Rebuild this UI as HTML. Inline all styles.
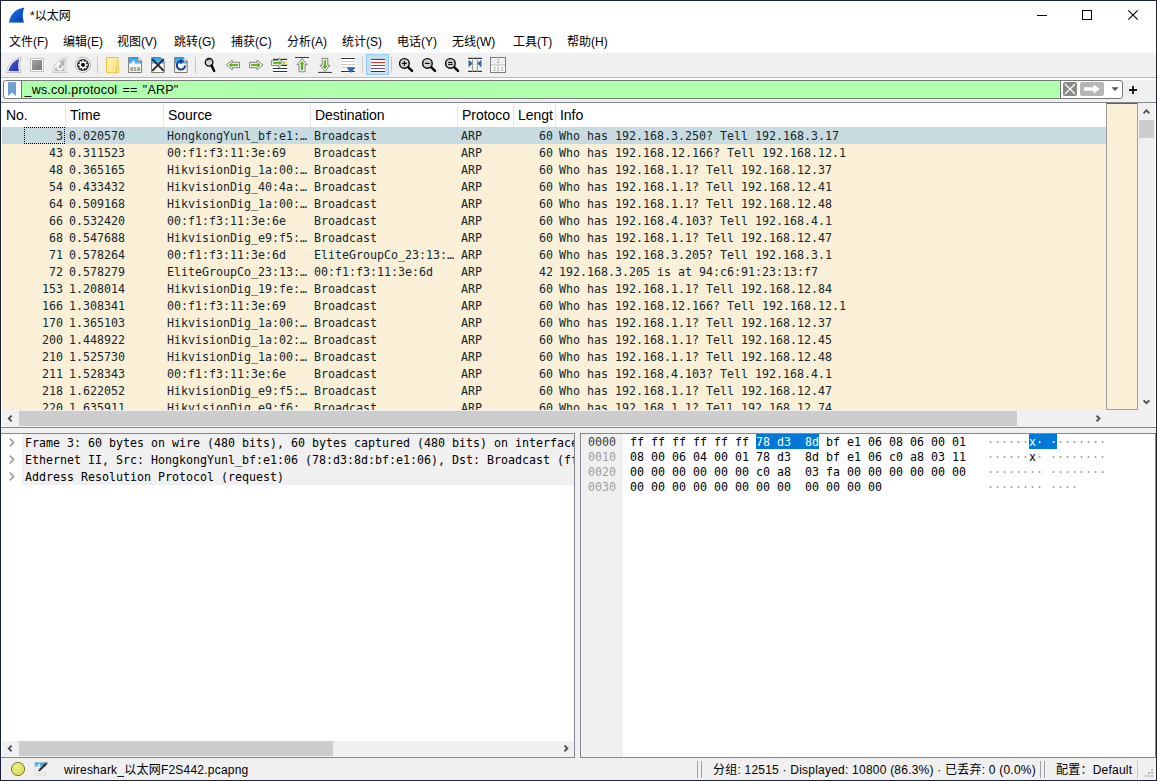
<!DOCTYPE html>
<html><head><meta charset="utf-8"><title>Wireshark</title>
<style>
*{box-sizing:border-box;margin:0;padding:0}
html,body{width:1157px;height:781px;overflow:hidden;background:#fff}
body{position:relative;font-family:"Liberation Sans","Noto Sans CJK SC",sans-serif;font-size:12px;color:#000}
.abs{position:absolute}
#win{position:absolute;left:0;top:0;width:1157px;height:781px;border:1px solid #1a2238;border-right-color:#1e2433;background:#f0f0f0}
#title{position:absolute;left:1px;top:1px;width:1155px;height:30px;background:#fff}
#title .t{position:absolute;left:29px;top:7px;font-size:12px;line-height:16px;white-space:nowrap}
#menu{position:absolute;left:1px;top:31px;width:1155px;height:21px;background:#fff}
#menu span{position:absolute;top:3px;line-height:16px;font-size:12px;white-space:nowrap}
#tb{position:absolute;left:1px;top:52px;width:1155px;height:25px;background:#f0f0f0;border-top:1px solid #fafafa}
#tbline{position:absolute;left:1px;top:77px;width:1155px;height:3px;background:#fcfcfc;border-top:1px solid #bcbcbc}
#filter{position:absolute;left:3px;top:80px;width:1120px;height:19px;border:1px solid #7a7a7a;border-radius:3px;background:#fff;overflow:hidden}
#filter .g{position:absolute;left:18px;top:0;width:1038px;height:17px;background:#afffaf}
#filter .txt{position:absolute;left:20.5px;top:1px;font-size:12.5px;letter-spacing:0.2px;word-spacing:1.6px;line-height:17px;white-space:nowrap}
#plist{position:absolute;left:1px;top:102px;width:1155px;height:325px;background:#fff;border-top:1px solid #828790}
.hdr{position:absolute;top:103px;height:24px;font-size:14px;letter-spacing:-0.04px;line-height:24px;white-space:nowrap}
.hsep{position:absolute;top:103px;width:1px;height:24px;background:#e5e5e5}
.row{position:absolute;left:2px;width:1104px;height:17px;background:#faf0d7;font-family:"DejaVu Sans Mono","Liberation Mono",monospace;font-size:11.63px;line-height:19px;white-space:pre;color:#12272e;overflow:hidden}
.row.sel{background:#c8dbe0}
.c{position:absolute;top:0;height:17px;line-height:19px}
.no{left:0;width:61px;text-align:right}
.tm{left:67px}
.src{left:165px}
.dst{left:312px}
.pr{left:459px}
.ln{left:515px;width:36px;text-align:right}
.inf{left:557px}

#mini{position:absolute;left:1106px;top:103px;width:32px;height:307px;background:#faf0d7;border:1px solid #a0a0a0;border-top:1px solid #0078d7}
#vsb{position:absolute;left:1138px;top:103px;width:17px;height:307px;background:#f0f0f0}
#vsb .th{position:absolute;left:1px;top:17px;width:15px;height:18px;background:#cdcdcd}
#hsb{position:absolute;left:2px;top:410px;width:1104px;height:17px;background:#f0f0f0}
#hsb .th{position:absolute;left:17px;top:1px;width:998px;height:15px;background:#cdcdcd}
#corner{position:absolute;left:1106px;top:410px;width:49px;height:17px;background:#f0f0f0}
#plb{position:absolute;left:1px;top:427px;width:1155px;height:1px;background:#828790}
#lp{position:absolute;left:1px;top:433px;width:574px;height:325px;background:#fff;border:1px solid #828790;border-left:none}
#rp{position:absolute;left:580px;top:433px;width:576px;height:325px;background:#fff;border:1px solid #828790}
.tr{position:absolute;left:22px;width:552px;height:17px;background:#f0f0f0;font-family:"DejaVu Sans Mono","Liberation Mono",monospace;font-size:11.63px;line-height:19px;white-space:pre;overflow:hidden;color:#000}
.tr span{position:absolute;left:3px;top:0}
#lhsb{position:absolute;left:2px;top:741px;width:572px;height:16px;background:#f0f0f0}
#lhsb .th{position:absolute;left:17px;top:0px;width:314px;height:15px;background:#cdcdcd}
#hexoff{position:absolute;left:581px;top:434px;width:42px;height:323px;background:#f0f0f0}
.hx{position:absolute;font-family:"DejaVu Sans Mono","Liberation Mono",monospace;font-size:11.63px;line-height:17px;height:15px;white-space:pre;color:#000}
.hx.off{left:588px;color:#a0a0a0}
.hx.by{left:630px}
.hx.as{left:987px;color:#000}
.hx .d{color:#9a9a9a}
.hsel{position:absolute;background:#0078d7;height:15px;top:434px}
.w{color:#fff}
#status{position:absolute;left:1px;top:758px;width:1155px;height:22px;background:#f0f0f0}
#status .s{position:absolute;top:4px;line-height:16px;font-size:12px;letter-spacing:0.22px;white-space:nowrap}
.vsep{position:absolute;top:761px;width:1px;height:17px;background:#a0a0a0}
svg{position:absolute;overflow:visible}
#tbicons{z-index:5}
</style></head><body>
<div id="win">
</div>
<div id="title"><span class="t">*以太网</span></div>
<div id="menu">
<span style="left:8px">文件(F)</span><span style="left:62px">编辑(E)</span><span style="left:116px">视图(V)</span><span style="left:173px">跳转(G)</span><span style="left:230px">捕获(C)</span><span style="left:286px">分析(A)</span><span style="left:341px">统计(S)</span><span style="left:396px">电话(Y)</span><span style="left:451px">无线(W)</span><span style="left:512px">工具(T)</span><span style="left:566px">帮助(H)</span>
</div>
<div id="tb"></div><div id="tbline"></div>
<div id="filter"><div class="g"></div><span class="txt">_ws.col.protocol == "ARP"</span></div>
<svg id="tbicons" style="left:0;top:0" width="1157" height="781" viewBox="0 0 1157 781">
<defs>
<linearGradient id="gfin" x1="0" y1="0" x2="1" y2="1"><stop offset="0" stop-color="#4a62d8"/><stop offset="1" stop-color="#1e2ea8"/></linearGradient>
<linearGradient id="gstop" x1="0" y1="0" x2="1" y2="1"><stop offset="0" stop-color="#a4a4a4"/><stop offset="1" stop-color="#767676"/></linearGradient>
<linearGradient id="gfold" x1="0" y1="0" x2="1" y2="1"><stop offset="0" stop-color="#fff0a8"/><stop offset="1" stop-color="#fde488"/></linearGradient>
<linearGradient id="gfile" x1="0" y1="0" x2="0" y2="1"><stop offset="0" stop-color="#2aa0ea"/><stop offset="0.36" stop-color="#5cb8f0"/><stop offset="0.46" stop-color="#f4f8f8"/><stop offset="1" stop-color="#fcfce6"/></linearGradient>
<linearGradient id="ggrn" x1="0" y1="0" x2="0" y2="1"><stop offset="0" stop-color="#6cc41c"/><stop offset="1" stop-color="#3c9400"/></linearGradient>
<linearGradient id="gtitle" x1="0" y1="0" x2="1" y2="1"><stop offset="0" stop-color="#2a86f0"/><stop offset="0.55" stop-color="#0c56cc"/><stop offset="1" stop-color="#0630a0"/></linearGradient>
</defs>
<!-- title icon -->
<path d="M9.1 22.7 C9.9 15 15 8.9 24.5 7.6 C22.6 11.6 22.1 17.2 24.1 22.7 Z" fill="url(#gtitle)"/>
<path d="M9.4 22.3 L24 22.3" stroke="#7c9cd8" stroke-width="0.9" fill="none"/>
<!-- window controls -->
<path d="M1037 15.5 H1047" stroke="#000" stroke-width="1" fill="none"/>
<rect x="1082.5" y="10.5" width="9" height="9" fill="none" stroke="#000" stroke-width="1"/>
<path d="M1128.3 10.3 L1137.7 19.7 M1137.7 10.3 L1128.3 19.7" stroke="#000" stroke-width="1.1" fill="none"/>
<!-- 1 start fin -->
<path d="M6.4 72.5 C7.6 65.5 12 59 21.4 57.3 C19.6 61.5 19.3 67 20.9 72.5 Z" fill="#fff" stroke="#b8b8b8" stroke-width="0.9"/>
<path d="M8.4 71.3 C9.6 65.8 13.2 60.8 19.3 58.9 C18 62.6 17.9 67.2 19 71.3 Z" fill="url(#gfin)"/>
<!-- 2 stop -->
<rect x="30.5" y="58.5" width="13" height="13" fill="#fafafa" stroke="#c4c4c4" stroke-width="1"/>
<rect x="32" y="60" width="10" height="10" fill="url(#gstop)"/>
<!-- 3 restart fin -->
<g transform="translate(46,0)">
<path d="M6.4 72.5 C7.6 65.5 12 59 21.4 57.3 C19.6 61.5 19.3 67 20.9 72.5 Z" fill="#f8f8f8" stroke="#c6c6c6" stroke-width="0.9"/>
<path d="M8.4 71.3 C9.6 65.8 13.2 60.8 19.3 58.9 C18 62.6 17.9 67.2 19 71.3 Z" fill="#b4b4b4"/>
<path d="M16.4 65.6 A2.7 2.7 0 1 1 12.6 64.6" fill="none" stroke="#fff" stroke-width="1.7"/>
<path d="M11.2 62.4 L15.2 63 L12.6 66.2 Z" fill="#fff"/>
</g>
<!-- 4 options gear -->
<circle cx="83" cy="64.9" r="7.6" fill="#fff" stroke="#a8a8a8" stroke-width="0.9"/>
<circle cx="83" cy="64.9" r="6" fill="#2a2a2a"/>
<g stroke="#fff" stroke-width="1.8" stroke-linecap="butt">
<path d="M83 60.3 V69.5 M78.4 64.9 H87.6 M79.75 61.65 L86.25 68.15 M86.25 61.65 L79.75 68.15"/>
</g>
<circle cx="83" cy="64.9" r="3.3" fill="#fff"/>
<rect x="81.2" y="63.1" width="3.6" height="3.6" rx="1.1" fill="#111"/>
<!-- sep -->
<rect x="97" y="57" width="1" height="16" fill="#c6c6c6"/>
<!-- 5 folder -->
<rect x="106.5" y="57.5" width="11.5" height="15.2" rx="0.8" fill="url(#gfold)" stroke="#e8c548" stroke-width="1.1"/>
<rect x="116.3" y="66.5" width="2.4" height="6.2" rx="0.6" fill="#fde994" stroke="#e8c548" stroke-width="1"/>
<!-- 6 file 010 -->
<g id="fileico">
<path d="M128.6 57.5 H138 L141.5 61 V72.5 H128.6 Z" fill="url(#gfile)" stroke="#7c7c78" stroke-width="1"/>
<path d="M138 57.5 V61 H141.5" fill="#f4ecd8" stroke="#7c7c78" stroke-width="0.7"/>
</g>
<path d="M131.5 64 C132.2 61.8 133.2 60.6 134.4 60 C134.1 61.4 134.2 62.8 134.6 64 Z" fill="#fff"/>
<text x="135" y="70.6" font-family="Liberation Mono,monospace" font-size="6.2" font-weight="bold" fill="#6c6c6c" text-anchor="middle" textLength="10" lengthAdjust="spacingAndGlyphs">010</text>
<!-- 7 file close -->
<g transform="translate(23,0)">
<path d="M128.6 57.5 H137.5 L141.2 61 V72.5 H128.6 Z" fill="url(#gfile)" stroke="#7c7c78" stroke-width="1"/>
<path d="M129.8 59.6 L140.2 70.4 M140.2 59.6 L129.8 70.4" stroke="#25292b" stroke-width="1.9" stroke-linecap="round"/>
</g>
<!-- 8 file reload -->
<g transform="translate(46,0)">
<path d="M128.6 57.5 H137.5 L141.2 61 V72.5 H128.6 Z" fill="url(#gfile)" stroke="#7c7c78" stroke-width="1"/>
<path d="M137.5 57.5 V61 H141.2" fill="#f4ecd8" stroke="#7c7c78" stroke-width="0.6"/>
<path d="M139 65.5 A4.1 4.1 0 1 1 135 61.3" fill="none" stroke="#103c94" stroke-width="2.1"/>
<path d="M134.2 58.8 L138.2 61.4 L134.2 63.9 Z" fill="#103c94"/>
</g>
<!-- sep -->
<rect x="195" y="57" width="1" height="16" fill="#c6c6c6"/>
<!-- 9 find -->
<circle cx="209.1" cy="62.3" r="3.8" fill="#d6d6d6" stroke="#000" stroke-width="1.3"/>
<path d="M207 60.8 A2.4 2.4 0 0 1 209.6 59.8" fill="none" stroke="#222" stroke-width="0.7"/>
<path d="M211.6 65.6 L214.2 71" stroke="#000" stroke-width="2.4" stroke-linecap="round"/>
<!-- 10 back -->
<path d="M226.3 65 L232.3 60.2 V62.3 H239.5 V67.7 H232.3 V69.8 Z" fill="#fff" stroke="#7e7e7e" stroke-width="1" stroke-linejoin="round"/>
<path d="M229 65 L231.6 62.9 V64.2 H238 V65.8 H231.6 V67.1 Z" fill="#4fa800" stroke="#4fa800" stroke-width="0.5"/>
<!-- 11 fwd -->
<path d="M263 65 L257 60.2 V62.3 H249.6 V67.7 H257 V69.8 Z" fill="#fff" stroke="#7e7e7e" stroke-width="1" stroke-linejoin="round"/>
<path d="M260.3 65 L257.7 62.9 V64.2 H251.2 V65.8 H257.7 V67.1 Z" fill="#4fa800" stroke="#4fa800" stroke-width="0.5"/>
<!-- 12 goto -->
<rect x="273" y="58" width="14.5" height="15" fill="#fff"/>
<rect x="284" y="61" width="3.3" height="3.4" fill="#fce94f"/>
<path d="M273 59.4 H287.2 M273 65.4 H287.2 M273 68.5 H287.2 M273 71.5 H287.2" stroke="#2e3436" stroke-width="1.1"/>
<path d="M284.4 62.9 L278.6 58.2 V60.4 H271.4 V65.4 H278.6 V67.6 Z" fill="#fff" stroke="#7e7e7e" stroke-width="0.9" stroke-linejoin="round"/>
<path d="M282 62.9 L279.6 60.9 V62.1 H273.2 V63.7 H279.6 V64.9 Z" fill="#5cb40c" stroke="#5cb40c" stroke-width="0.5"/>
<!-- 13 top -->
<rect x="294.6" y="56.5" width="15" height="2" fill="#fff"/>
<path d="M295 57.5 H309" stroke="#3a3e3a" stroke-width="1.1"/>
<path d="M302 58.6 L307 64.6 H305 V71.8 H299 V64.6 H297 Z" fill="#fff" stroke="#7e7e7e" stroke-width="1" stroke-linejoin="round"/>
<path d="M302 61.2 L304.1 63.8 H302.9 V69.8 H301.1 V63.8 H299.9 Z" fill="url(#ggrn)" stroke="#4fa800" stroke-width="0.5"/>
<!-- 14 bottom -->
<rect x="317.6" y="71.4" width="15" height="2" fill="#fff"/>
<path d="M318 72.4 H332" stroke="#3a3e3a" stroke-width="1.1"/>
<path d="M325 71.4 L330 65.3 H327.8 V58.4 H322.2 V65.3 H320 Z" fill="#fff" stroke="#7e7e7e" stroke-width="1" stroke-linejoin="round"/>
<path d="M325 68.8 L327.1 66.2 H325.9 V60.4 H324.1 V66.2 H322.9 Z" fill="url(#ggrn)" stroke="#4fa800" stroke-width="0.5"/>
<!-- 15 autoscroll -->
<rect x="340.6" y="57.4" width="15" height="15.4" fill="#fff"/>
<path d="M341 58.5 H355 M341 71.5 H355" stroke="#2e3436" stroke-width="1.2"/>
<path d="M341 61.5 H355 M341 64.5 H355 M341 67.5 H355" stroke="#c4c8bc" stroke-width="0.9"/>
<path d="M346.8 67.2 H355.2 C355 69 352.6 70.5 351.6 72.4 H350.4 C349.4 70.5 347 69 346.8 67.2 Z" fill="#3465a4"/>
<!-- sep -->
<rect x="362" y="57" width="1" height="16" fill="#c6c6c6"/>
<!-- 16 colorize -->
<rect x="366.5" y="54.5" width="22" height="20" fill="#c4def3" stroke="#92c8f6" stroke-width="1"/>
<rect x="371" y="58.8" width="14" height="13.5" fill="#fdfffe"/>
<path d="M371 59.4 H385 M371 71.5 H385" stroke="#2e3436" stroke-width="1"/>
<path d="M371 62.5 H385" stroke="#ef2929" stroke-width="1"/>
<path d="M371 65.5 H385" stroke="#3465a4" stroke-width="1"/>
<path d="M371 68.5 H385" stroke="#75507b" stroke-width="1"/>
<rect x="391" y="57" width="1" height="16" fill="#c6c6c6"/>
<!-- 17 zoom in -->
<g id="zm">
<circle cx="404.4" cy="63.4" r="4.8" fill="#d2d2d2" stroke="#000" stroke-width="1.4"/>
<path d="M408.4 67.4 L412 70.8" stroke="#000" stroke-width="2.5" stroke-linecap="round"/>
</g>
<path d="M402.1 63.4 H406.7 M404.4 61.1 V65.7" stroke="#000" stroke-width="1.1"/>
<!-- 18 zoom out -->
<g transform="translate(23,0)">
<circle cx="404.4" cy="63.4" r="4.8" fill="#d2d2d2" stroke="#000" stroke-width="1.4"/>
<path d="M408.4 67.4 L412 70.8" stroke="#000" stroke-width="2.5" stroke-linecap="round"/>
<path d="M402 63.4 H406.8" stroke="#000" stroke-width="1.2"/>
</g>
<!-- 19 zoom reset -->
<g transform="translate(46,0)">
<circle cx="404.4" cy="63.4" r="4.8" fill="#d2d2d2" stroke="#000" stroke-width="1.4"/>
<path d="M408.4 67.4 L412 70.8" stroke="#000" stroke-width="2.5" stroke-linecap="round"/>
<path d="M402.1 62.4 H406.7 M402.1 64.4 H406.7" stroke="#000" stroke-width="1"/>
</g>
<!-- 20 resize cols -->
<rect x="467.6" y="57.4" width="15" height="15.2" fill="#fff"/>
<path d="M468 61.5 H482 M468 64.5 H482 M468 67.5 H482" stroke="#dcdcd0" stroke-width="0.8"/>
<path d="M468 58.4 H482 M468 71.4 H482" stroke="#2e3436" stroke-width="1.1"/>
<path d="M472.6 58 V72 M477.4 58 V72" stroke="#8c8c84" stroke-width="0.9"/>
<path d="M468.8 60.2 L472.4 63.5 L468.8 66.8 Z" fill="#3465a4" stroke="#3465a4" stroke-width="0.6" stroke-linejoin="round"/>
<path d="M481.2 60.2 L477.6 63.5 L481.2 66.8 Z" fill="#3465a4" stroke="#3465a4" stroke-width="0.6" stroke-linejoin="round"/>
<!-- 21 layout -->
<rect x="490.5" y="57.5" width="15" height="15" fill="#fff" stroke="#7a7e82" stroke-width="1"/>
<rect x="491" y="58" width="14" height="6.3" fill="#f0f0f0"/>
<rect x="491" y="64.3" width="14" height="1.2" fill="#c2c2c2"/>
<rect x="497.4" y="65.5" width="1.4" height="6.5" fill="#c2c2c2"/>
<text x="498.2" y="63.2" font-family="Liberation Sans,sans-serif" font-size="5" fill="#8a8a8a" text-anchor="middle">1</text>
<text x="494.3" y="70.8" font-family="Liberation Sans,sans-serif" font-size="5" fill="#8a8a8a" text-anchor="middle">2</text>
<text x="502" y="70.8" font-family="Liberation Sans,sans-serif" font-size="5" fill="#8a8a8a" text-anchor="middle">3</text>

<!-- filter bar bits -->
<path d="M8 82 H16 V96 L12 92.6 L8 96 Z" fill="#6f9fd4"/>
<path d="M8 82 H16 V86 H8 Z" fill="#7ca8d8" opacity="0.6"/>
<rect x="21" y="81" width="1" height="17" fill="#6e6e6e"/>
<rect x="1060" y="81" width="1" height="17" fill="#6e6e6e"/>
<rect x="1063" y="82" width="14" height="14" rx="2" fill="#888a85"/>
<path d="M1065 84 L1075 94 M1075 84 L1065 94" stroke="#fff" stroke-width="1.3"/>
<rect x="1080" y="82" width="24" height="14" rx="2" fill="#b6b6b6"/>
<path d="M1084 87.3 H1093.5 V84.6 L1100 89 L1093.5 93.4 V90.7 H1084 Z" fill="#fff"/>
<path d="M1111.4 87.2 H1118.6 L1115 91 Z" fill="#555"/>
<path d="M1129 90 H1137 M1133 86 V94" stroke="#1a1a1a" stroke-width="1.9"/>

<!-- status icons -->
<defs><radialGradient id="gyel" cx="0.4" cy="0.35" r="0.7"><stop offset="0" stop-color="#ecec88"/><stop offset="1" stop-color="#dede54"/></radialGradient>
<linearGradient id="gpage" x1="0" y1="0" x2="0" y2="1"><stop offset="0" stop-color="#2aa0ea"/><stop offset="0.28" stop-color="#58b6ee"/><stop offset="0.4" stop-color="#f6f8f8"/><stop offset="1" stop-color="#f0f0ee"/></linearGradient></defs>
<circle cx="18" cy="769" r="6.6" fill="url(#gyel)" stroke="#6c6c1c" stroke-width="0.9"/>
<rect x="34.8" y="762.2" width="10.8" height="13.2" fill="url(#gpage)" stroke="#d4d4d0" stroke-width="0.6"/>
<path d="M37.6 766.4 C38 764.8 38.8 763.8 39.8 763.3 C39.6 764.4 39.7 765.4 40 766.4 Z" fill="#fff"/>
<path d="M36.5 768.5 H43.5 M36.5 771 H43.5 M36.5 773.5 H43.5" stroke="#d8d8d8" stroke-width="0.8"/>
<path d="M39.6 770 L46.8 763" stroke="#2a2a2a" stroke-width="2.2"/>
<path d="M38.2 771.6 L39 769.4 L40.4 770.8 Z" fill="#111"/>
<path d="M46.2 763.6 L47.4 762.4" stroke="#8a8a8a" stroke-width="2.2"/>
<!-- grip -->
<g fill="#bcbcbc"><rect x="1151" y="769" width="2" height="2"/><rect x="1148" y="772" width="2" height="2"/><rect x="1151" y="772" width="2" height="2"/><rect x="1145" y="775" width="2" height="2"/><rect x="1148" y="775" width="2" height="2"/><rect x="1151" y="775" width="2" height="2"/></g>
</svg>

<div id="plist"></div>
<span class="hdr" style="left:6px">No.</span><span class="hdr" style="left:70px">Time</span><span class="hdr" style="left:168px">Source</span><span class="hdr" style="left:315px">Destination</span><span class="hdr" style="left:462px">Protoco</span><span class="hdr" style="left:518px">Lengt</span><span class="hdr" style="left:560px">Info</span>
<div class="hsep" style="left:65px"></div><div class="hsep" style="left:163px"></div><div class="hsep" style="left:310px"></div><div class="hsep" style="left:457px"></div><div class="hsep" style="left:513px"></div><div class="hsep" style="left:555px"></div>
<div class="row sel" style="top:127px"><span class="c no">3</span><span class="c tm">0.020570</span><span class="c src">HongkongYunl_bf:e1:…</span><span class="c dst">Broadcast</span><span class="c pr">ARP</span><span class="c ln">60</span><span class="c inf">Who has 192.168.3.250? Tell 192.168.3.17</span></div>
<div class="row" style="top:144px"><span class="c no">43</span><span class="c tm">0.311523</span><span class="c src">00:f1:f3:11:3e:69</span><span class="c dst">Broadcast</span><span class="c pr">ARP</span><span class="c ln">60</span><span class="c inf">Who has 192.168.12.166? Tell 192.168.12.1</span></div>
<div class="row" style="top:161px"><span class="c no">48</span><span class="c tm">0.365165</span><span class="c src">HikvisionDig_1a:00:…</span><span class="c dst">Broadcast</span><span class="c pr">ARP</span><span class="c ln">60</span><span class="c inf">Who has 192.168.1.1? Tell 192.168.12.37</span></div>
<div class="row" style="top:178px"><span class="c no">54</span><span class="c tm">0.433432</span><span class="c src">HikvisionDig_40:4a:…</span><span class="c dst">Broadcast</span><span class="c pr">ARP</span><span class="c ln">60</span><span class="c inf">Who has 192.168.1.1? Tell 192.168.12.41</span></div>
<div class="row" style="top:195px"><span class="c no">64</span><span class="c tm">0.509168</span><span class="c src">HikvisionDig_1a:00:…</span><span class="c dst">Broadcast</span><span class="c pr">ARP</span><span class="c ln">60</span><span class="c inf">Who has 192.168.1.1? Tell 192.168.12.48</span></div>
<div class="row" style="top:212px"><span class="c no">66</span><span class="c tm">0.532420</span><span class="c src">00:f1:f3:11:3e:6e</span><span class="c dst">Broadcast</span><span class="c pr">ARP</span><span class="c ln">60</span><span class="c inf">Who has 192.168.4.103? Tell 192.168.4.1</span></div>
<div class="row" style="top:229px"><span class="c no">68</span><span class="c tm">0.547688</span><span class="c src">HikvisionDig_e9:f5:…</span><span class="c dst">Broadcast</span><span class="c pr">ARP</span><span class="c ln">60</span><span class="c inf">Who has 192.168.1.1? Tell 192.168.12.47</span></div>
<div class="row" style="top:246px"><span class="c no">71</span><span class="c tm">0.578264</span><span class="c src">00:f1:f3:11:3e:6d</span><span class="c dst">EliteGroupCo_23:13:…</span><span class="c pr">ARP</span><span class="c ln">60</span><span class="c inf">Who has 192.168.3.205? Tell 192.168.3.1</span></div>
<div class="row" style="top:263px"><span class="c no">72</span><span class="c tm">0.578279</span><span class="c src">EliteGroupCo_23:13:…</span><span class="c dst">00:f1:f3:11:3e:6d</span><span class="c pr">ARP</span><span class="c ln">42</span><span class="c inf">192.168.3.205 is at 94:c6:91:23:13:f7</span></div>
<div class="row" style="top:280px"><span class="c no">153</span><span class="c tm">1.208014</span><span class="c src">HikvisionDig_19:fe:…</span><span class="c dst">Broadcast</span><span class="c pr">ARP</span><span class="c ln">60</span><span class="c inf">Who has 192.168.1.1? Tell 192.168.12.84</span></div>
<div class="row" style="top:297px"><span class="c no">166</span><span class="c tm">1.308341</span><span class="c src">00:f1:f3:11:3e:69</span><span class="c dst">Broadcast</span><span class="c pr">ARP</span><span class="c ln">60</span><span class="c inf">Who has 192.168.12.166? Tell 192.168.12.1</span></div>
<div class="row" style="top:314px"><span class="c no">170</span><span class="c tm">1.365103</span><span class="c src">HikvisionDig_1a:00:…</span><span class="c dst">Broadcast</span><span class="c pr">ARP</span><span class="c ln">60</span><span class="c inf">Who has 192.168.1.1? Tell 192.168.12.37</span></div>
<div class="row" style="top:331px"><span class="c no">200</span><span class="c tm">1.448922</span><span class="c src">HikvisionDig_1a:02:…</span><span class="c dst">Broadcast</span><span class="c pr">ARP</span><span class="c ln">60</span><span class="c inf">Who has 192.168.1.1? Tell 192.168.12.45</span></div>
<div class="row" style="top:348px"><span class="c no">210</span><span class="c tm">1.525730</span><span class="c src">HikvisionDig_1a:00:…</span><span class="c dst">Broadcast</span><span class="c pr">ARP</span><span class="c ln">60</span><span class="c inf">Who has 192.168.1.1? Tell 192.168.12.48</span></div>
<div class="row" style="top:365px"><span class="c no">211</span><span class="c tm">1.528343</span><span class="c src">00:f1:f3:11:3e:6e</span><span class="c dst">Broadcast</span><span class="c pr">ARP</span><span class="c ln">60</span><span class="c inf">Who has 192.168.4.103? Tell 192.168.4.1</span></div>
<div class="row" style="top:382px"><span class="c no">218</span><span class="c tm">1.622052</span><span class="c src">HikvisionDig_e9:f5:…</span><span class="c dst">Broadcast</span><span class="c pr">ARP</span><span class="c ln">60</span><span class="c inf">Who has 192.168.1.1? Tell 192.168.12.47</span></div>
<div class="row" style="top:399px"><span class="c no">220</span><span class="c tm">1.635911</span><span class="c src">HikvisionDig_e9:f6:…</span><span class="c dst">Broadcast</span><span class="c pr">ARP</span><span class="c ln">60</span><span class="c inf">Who has 192.168.1.1? Tell 192.168.12.74</span></div>

<div id="mini"></div>
<div style="position:absolute;left:24px;top:127px;width:41px;height:17px;border:1px dotted #000"></div>
<div id="vsb"><div class="th"></div><svg style="left:0;top:0" width="17" height="307"><path d="M5.549999999999999 10.35 L8.45 7.45 L11.35 10.35" fill="none" stroke="#505050" stroke-width="1.9"/><path d="M5.549999999999999 297.35 L8.45 300.25 L11.35 297.35" fill="none" stroke="#505050" stroke-width="1.9"/></svg>
</div>
<div id="hsb"><div class="th"></div><svg style="left:0;top:0" width="1104" height="17"><path d="M9.649999999999999 5.65 L6.749999999999999 8.55 L9.649999999999999 11.450000000000001" fill="none" stroke="#505050" stroke-width="1.9"/><path d="M1094.55 5.6 L1097.45 8.5 L1094.55 11.4" fill="none" stroke="#505050" stroke-width="1.9"/></svg>
</div>
<div id="corner"></div>
<div id="plb"></div>
<div id="lp"></div>
<div class="tr" style="top:434px"><span>Frame 3: 60 bytes on wire (480 bits), 60 bytes captured (480 bits) on interface</span></div>
<div class="tr" style="top:451px"><span>Ethernet II, Src: HongkongYunl_bf:e1:06 (78:d3:8d:bf:e1:06), Dst: Broadcast (ff:ff:ff:ff:ff:ff)</span></div>
<div class="tr" style="top:468px"><span>Address Resolution Protocol (request)</span></div>
<svg style="left:9px;top:438px" width="6" height="9" viewBox="0 0 6 9"><path d="M0.8 0.6 L4.6 4.5 L0.8 8.4" fill="none" stroke="#9c9c9c" stroke-width="1.6"/></svg>
<svg style="left:9px;top:455px" width="6" height="9" viewBox="0 0 6 9"><path d="M0.8 0.6 L4.6 4.5 L0.8 8.4" fill="none" stroke="#9c9c9c" stroke-width="1.6"/></svg>
<svg style="left:9px;top:472px" width="6" height="9" viewBox="0 0 6 9"><path d="M0.8 0.6 L4.6 4.5 L0.8 8.4" fill="none" stroke="#9c9c9c" stroke-width="1.6"/></svg>
<div id="lhsb"><div class="th"></div><svg style="left:0;top:0" width="572" height="16"><path d="M9.649999999999999 4.65 L6.749999999999999 7.55 L9.649999999999999 10.45" fill="none" stroke="#505050" stroke-width="1.9"/><path d="M562.4499999999999 4.5 L565.35 7.4 L562.4499999999999 10.3" fill="none" stroke="#505050" stroke-width="1.9"/></svg>
</div>
<div id="rp"></div>
<div id="hexoff"></div>
<div class="hsel" style="left:756px;width:63px"></div>
<div class="hsel" style="left:1029px;width:28px"></div>
<div class="hx off" style="top:434px;color:#404040">0000</div>
<div class="hx off" style="top:449px">0010</div>
<div class="hx off" style="top:464px">0020</div>
<div class="hx off" style="top:479px">0030</div>
<div class="hx by" style="top:434px">ff ff ff ff ff ff <span class="w">78 d3  8d</span> bf e1 06 08 06 00 01</div>
<div class="hx by" style="top:449px">08 00 06 04 00 01 78 d3  8d bf e1 06 c0 a8 03 11</div>
<div class="hx by" style="top:464px">00 00 00 00 00 00 c0 a8  03 fa 00 00 00 00 00 00</div>
<div class="hx by" style="top:479px">00 00 00 00 00 00 00 00  00 00 00 00</div>
<div class="hx as" style="top:434px"><span class="d">······</span><span class="w">x· ·</span><span class="d">·······</span></div>
<div class="hx as" style="top:449px"><span class="d">······</span>x<span class="d">· ········</span></div>
<div class="hx as" style="top:464px"><span class="d">········ ········</span></div>
<div class="hx as" style="top:479px"><span class="d">········ ····</span></div>
<div id="status">
<span class="s" style="left:63px">wireshark_以太网F2S442.pcapng</span>
<span class="s" style="left:712px">分组: 12515 · Displayed: 10800 (86.3%) · 已丢弃: 0 (0.0%)</span>
<span class="s" style="left:1055px">配置：Default</span>
</div>
<div class="vsep" style="left:697px"></div><div class="vsep" style="left:701px"></div>
<div class="vsep" style="left:1040px"></div><div class="vsep" style="left:1044px"></div>
<div class="vsep" style="left:1137px;background:#c8c8c8"></div>
</body></html>
